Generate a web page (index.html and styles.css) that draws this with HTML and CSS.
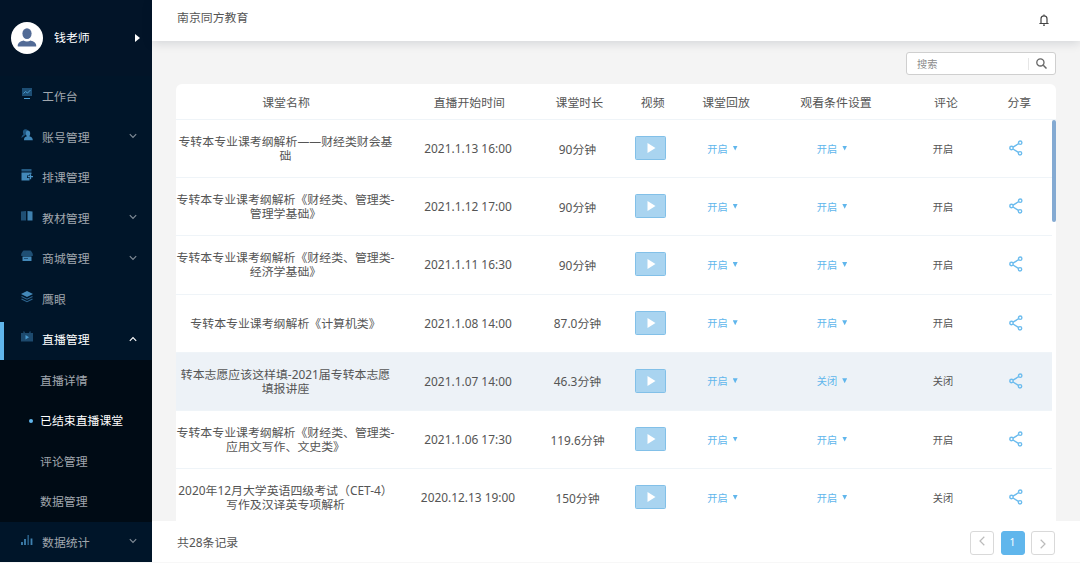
FILE: index.html
```html
<!DOCTYPE html>
<html lang="zh-CN">
<head>
  <meta charset="UTF-8" />
  <meta name="viewport" content="width=device-width, initial-scale=1.0"/>
  <title>南京同方教育</title>
  <link rel="stylesheet" href="styles.css">
</head>
<body>
  <!-- shared icons -->
  <svg class="sprite">
    <symbol id="down" viewBox="0 0 8 6"><path d="M.8 1.2 4 4.5 7.2 1.2" fill="none" stroke="currentColor" stroke-width="1.1"/></symbol>
    <symbol id="share" viewBox="0 0 14 16"><g fill="none" stroke="currentColor" stroke-width="1.4"><circle cx="2.5" cy="8" r="1.7"/><circle cx="11.2" cy="2.7" r="1.7"/><circle cx="11" cy="13.3" r="1.7"/><path d="M4 7.1l5.600-3.400M4 9l5.400 3.400"/></g></symbol>
    <symbol id="play" viewBox="0 0 8 10"><path d="M0 0v10l8-5z" fill="#fff"/></symbol>
  </svg>

  <div class="layout">
    <aside class="sidebar">
      <div class="user">
        <div class="avatar">
          <svg width="20" height="20" viewBox="0 0 20 20" fill="#526b96"><ellipse cx="10" cy="5.6" rx="4.6" ry="5.4"/><path d="M.8 18.6c-.5-3.6 2.2-5.3 5.6-6.2 2.3 1.5 4.9 1.5 7.2 0 3.400.9 6.100 2.600 5.600 6.200z"/></svg>
        </div>
        <span class="user-name">钱老师</span>
        <i class="user-arrow"></i>
      </div>

      <div class="menu-item">
        <svg class="menu-icon" viewBox="0 0 12 12"><path d="M1 0h10v8H1z" fill="#1d4e74"/><path d="M2.500 5.500l2-2 2 1.500 3-3M3 10.500h6" fill="none" stroke="#4a9bd0"/></svg>
        <span>工作台</span>
      </div>
      <div class="menu-item">
        <svg class="menu-icon" viewBox="0 0 12 12"><path d="M.5 9c0-2 .8-3 2-3.500C1.200 2.500 2.300.3 4.500.3S7.500 2 7 4z" fill="#1f5680"/><path d="M3 11.300c-.2-2.500 1-3.400 3-4C4 5 4.800 1.400 7 1.400S10 5 8.300 7.300c2 .6 3.500 1.500 3.500 4z" fill="#4187b8"/></svg>
        <span>账号管理</span><svg class="arrow"><use href="#down"/></svg>
      </div>
      <div class="menu-item">
        <svg class="menu-icon" viewBox="0 0 12 12"><path d="M.5 0h10v2.500H.5z" fill="#245a82"/><path d="M.5 3.500h10v1.500H8.500V6.500H6v2.500h2.500v2.500h-8z" fill="#4389b9"/><path d="M6.800 7.700h5.200M9.500 5.200v5" stroke="#4a94c6" stroke-width="1.300"/></svg>
        <span>排课管理</span>
      </div>
      <div class="menu-item">
        <svg class="menu-icon" viewBox="0 0 12 12"><path d="M0 1.500l5-.5v9.500H0z" fill="#1f4f74"/><path d="M6.500 1l5 .5v9h-5z" fill="#3f81af"/></svg>
        <span>教材管理</span><svg class="arrow"><use href="#down"/></svg>
      </div>
      <div class="menu-item">
        <svg class="menu-icon" viewBox="0 0 12 12"><path d="M2.500.5h7Q11 1.500 11.800 4v2H.2V4Q1 1.500 2.500.5z" fill="#1f4f74"/><path d="M1.500 6.500h9V11h-9z" fill="#4389b9"/><path d="M3 8.500h4" stroke="#1f4f74"/></svg>
        <span>商城管理</span><svg class="arrow"><use href="#down"/></svg>
      </div>
      <div class="menu-item">
        <svg class="menu-icon" viewBox="0 0 12 12"><path d="M6 0l6 3-6 3-6-3z" fill="#4389b9"/><path d="M.5 5.500L6 8.200l5.500-2.700M.5 8L6 10.700 11.500 8" fill="none" stroke="#2c648e" stroke-width="1.200"/></svg>
        <span>鹰眼</span>
      </div>
      <div class="menu-item open">
        <svg class="menu-icon" viewBox="0 0 12 12"><path d="M0 2h2.500L2 .5h1.500L4 2h4L8.500.5H10L9.500 2H12v8.500H0z" fill="#1d4a6e"/><path d="M4.500 4v4.500L8 6.200z" fill="#4a9bd0"/></svg>
        <span>直播管理</span><svg class="arrow"><use href="#down"/></svg>
      </div>
      <div class="submenu">
        <div class="submenu-item">直播详情</div>
        <div class="submenu-item current">已结束直播课堂</div>
        <div class="submenu-item">评论管理</div>
        <div class="submenu-item">数据管理</div>
      </div>
      <div class="menu-item">
        <svg class="menu-icon" viewBox="0 0 12 12"><path d="M1 8v3M4 5v6M10.500 4.500V11" stroke="#3f81af" stroke-width="1.800"/><path d="M7.200 1v10" stroke="#265b83" stroke-width="1.600"/></svg>
        <span>数据统计</span><svg class="arrow"><use href="#down"/></svg>
      </div>
    </aside>

    <div class="main">
      <header class="topbar">
        <span>南京同方教育</span>
        <svg class="bell" viewBox="0 0 10 12"><path d="M2 9.300V4.800a3 3 0 0 1 6 0v4.500M.4 9.500h9.200M5 .4v1.500M4 11.200h2" fill="none" stroke="#444" stroke-width="1.200"/></svg>
      </header>

      <section class="content">
        <div class="search">
          <span class="search-text">搜索</span>
          <span class="search-btn"><svg width="11" height="11" viewBox="0 0 11 11"><path d="M7.300 7.300l3.200 3.200" stroke="#666" stroke-width="1.500"/><circle cx="4.400" cy="4.400" r="3.600" fill="none" stroke="#666" stroke-width="1.300"/></svg></span>
        </div>

        <div class="table">
          <div class="row head">
            <div>课堂名称</div><div>直播开始时间</div><div>课堂时长</div><div>视频</div>
            <div>课堂回放</div><div>观看条件设置</div><div>评论</div><div>分享</div>
          </div>
          <div class="table-body">
            <div class="rows">
              <div class="row">
                <div class="name">专转本专业课考纲解析——财经类财会基<br>础</div><div>2021.1.13 16:00</div><div>90分钟</div>
                <div><span class="video"><svg><use href="#play"/></svg></span></div>
                <div class="select">开启<i></i></div><div class="select">开启<i></i></div><div class="small">开启</div>
                <div><svg class="share"><use href="#share"/></svg></div>
              </div>
              <div class="row">
                <div class="name">专转本专业课考纲解析《财经类、管理类-<br>管理学基础》</div><div>2021.1.12 17:00</div><div>90分钟</div>
                <div><span class="video"><svg><use href="#play"/></svg></span></div>
                <div class="select">开启<i></i></div><div class="select">开启<i></i></div><div class="small">开启</div>
                <div><svg class="share"><use href="#share"/></svg></div>
              </div>
              <div class="row">
                <div class="name">专转本专业课考纲解析《财经类、管理类-<br>经济学基础》</div><div>2021.1.11 16:30</div><div>90分钟</div>
                <div><span class="video"><svg><use href="#play"/></svg></span></div>
                <div class="select">开启<i></i></div><div class="select">开启<i></i></div><div class="small">开启</div>
                <div><svg class="share"><use href="#share"/></svg></div>
              </div>
              <div class="row">
                <div class="name">专转本专业课考纲解析《计算机类》</div><div>2021.1.08 14:00</div><div>87.0分钟</div>
                <div><span class="video"><svg><use href="#play"/></svg></span></div>
                <div class="select">开启<i></i></div><div class="select">开启<i></i></div><div class="small">开启</div>
                <div><svg class="share"><use href="#share"/></svg></div>
              </div>
              <div class="row active">
                <div class="name">转本志愿应该这样填-2021届专转本志愿<br>填报讲座</div><div>2021.1.07 14:00</div><div>46.3分钟</div>
                <div><span class="video"><svg><use href="#play"/></svg></span></div>
                <div class="select">开启<i></i></div><div class="select">关闭<i></i></div><div class="small">关闭</div>
                <div><svg class="share"><use href="#share"/></svg></div>
              </div>
              <div class="row">
                <div class="name">专转本专业课考纲解析《财经类、管理类-<br>应用文写作、文史类》</div><div>2021.1.06 17:30</div><div>119.6分钟</div>
                <div><span class="video"><svg><use href="#play"/></svg></span></div>
                <div class="select">开启<i></i></div><div class="select">开启<i></i></div><div class="small">开启</div>
                <div><svg class="share"><use href="#share"/></svg></div>
              </div>
              <div class="row">
                <div class="name">2020年12月大学英语四级考试（CET-4）<br>写作及汉译英专项解析</div><div>2020.12.13 19:00</div><div>150分钟</div>
                <div><span class="video"><svg><use href="#play"/></svg></span></div>
                <div class="select">开启<i></i></div><div class="select">开启<i></i></div><div class="small">关闭</div>
                <div><svg class="share"><use href="#share"/></svg></div>
              </div>
            </div>
            <div class="scrollbar"></div>
          </div>
        </div>
      </section>

      <footer class="footer">
        <span>共28条记录</span>
        <div class="pager">
          <span class="page prev"><svg width="6" height="10" viewBox="0 0 6 10"><path d="M5.300.8 1 5l4.300 4.200" fill="none" stroke="#bbb" stroke-width="1.200"/></svg></span>
          <span class="page on">1</span>
          <span class="page next"><svg width="6" height="10" viewBox="0 0 6 10"><path d="M.7.8 5 5 .7 9.200" fill="none" stroke="#bbb" stroke-width="1.200"/></svg></span>
        </div>
      </footer>
    </div>
  </div>
</body>
</html>
```
FILE: styles.css
```css
* {
  margin: 0;
  padding: 0;
  box-sizing: border-box;
}

body {
  height: 563px;
  overflow: hidden;
  font-family: "Noto Sans", "Noto Sans CJK SC", sans-serif;
  font-size: 11.9px;
  color: #555;
  background: #f7f7f7;
}

.sprite {
  display: none;
}

.layout {
  display: flex;
  height: 562px;
}

/* sidebar */
.sidebar {
  width: 152px;
  flex: none;
  background: #001529;
  color: #a0a7ae;
}

.user {
  height: 76px;
  display: flex;
  align-items: center;
  padding: 0 12px 0 11px;
  background: #021428;
  color: #fff;
}

.avatar {
  width: 32px;
  height: 32px;
  border-radius: 50%;
  background: #fff;
  display: flex;
  align-items: center;
  justify-content: center;
}

.user-name {
  margin-left: 11px;
  padding-bottom: 3px;
}

.user-arrow {
  margin-left: auto;
  border: 4.5px solid transparent;
  border-left: 5px solid #fff;
  border-right: 0;
}

.menu-item {
  height: 40.5px;
  display: flex;
  align-items: center;
  padding: 0 15px 0 21px;
}

.menu-item span {
  padding-bottom: 1px;
}

.menu-icon {
  width: 12px;
  height: 12px;
  margin: 0 9px 4px 0;
}

.arrow {
  width: 8px;
  height: 6px;
  margin-left: auto;
  margin-bottom: 1px;
  color: #828d98;
}

.open {
  color: #fff;
  background: linear-gradient(#60b6ec, #60b6ec) left bottom / 4px 38px no-repeat;
}

.open .arrow {
  color: #fff;
  transform: rotate(180deg);
}

.submenu {
  background: #000b15;
}

.submenu-item {
  height: 40.5px;
  line-height: 40px;
  padding-left: 40px;
}

.current {
  color: #fff;
  padding-left: 29px;
  display: flex;
  align-items: center;
}

.current::before {
  content: "";
  width: 4px;
  height: 4px;
  margin: 2px 7px 0 0;
  border-radius: 50%;
  background: #60b6ec;
}

/* right side */
.main {
  flex: 1;
  display: flex;
  flex-direction: column;
  background: #f4f4f4;
}

.topbar {
  height: 41px;
  flex: none;
  display: flex;
  align-items: center;
  justify-content: space-between;
  padding: 0 31px 4px 25px;
  background: #fff;
  box-shadow: 0 2px 10px rgba(0, 21, 41, 0.14);
}

.topbar span {
  padding-bottom: 4px;
}

.bell {
  width: 10px;
  height: 12px;
  margin-top: 2px;
}

.content {
  flex: 1;
  min-height: 0;
  padding: 11px 24px 0;
  display: flex;
  flex-direction: column;
}

.search {
  width: 150px;
  height: 23px;
  flex: none;
  align-self: flex-end;
  display: flex;
  align-items: center;
  justify-content: space-between;
  padding-left: 10px;
  border: 1px solid #cfcfcf;
  border-radius: 3px;
  background: #fff;
}

.search-text {
  font-size: 10.2px;
  color: #8c8c8c;
}

.search-btn {
  width: 27px;
  height: 12px;
  display: flex;
  align-items: center;
  justify-content: center;
  padding-right: 2px;
  border-left: 1px solid #e6e6e6;
}

.table {
  margin-top: 9px;
  flex: 1;
  min-height: 0;
  overflow: hidden;
  background: #fff;
  border-radius: 6px 6px 0 0;
}

.row {
  height: 58.2px;
  display: grid;
  grid-template-columns: 6fr 4fr 2fr 2fr 2fr 4fr 2fr 2fr;
  align-items: center;
  text-align: center;
  white-space: nowrap;
  border-bottom: 1px solid #eff4f8;
}

.row > div {
  min-width: 0;
  display: flex;
  align-items: center;
  justify-content: center;
  padding-bottom: 1px;
}

.row .name {
  display: block;
  line-height: 14px;
  padding-bottom: 1px;
}

.head {
  height: 36px;
}

.active {
  background: #edf2f7;
}

.table-body {
  display: flex;
  align-items: flex-start;
}

.rows {
  flex: 1;
}

.scrollbar {
  width: 4px;
  height: 102px;
  border-radius: 2px;
  background: #84aad2;
}

.video {
  width: 31px;
  height: 24px;
  display: flex;
  align-items: center;
  justify-content: center;
  border: 1px solid #82c0e8;
  border-radius: 1.5px;
  background: #a9d4f0;
}

.video svg {
  width: 9px;
  height: 10px;
  margin-left: 1px;
}

.row .select {
  font-size: 10.2px;
  color: #60b6ec;
  padding-right: 2px;
}

.select i {
  width: 5px;
  height: 5px;
  margin-left: 5px;
  background: #60b6ec;
  clip-path: polygon(0 0, 100% 0, 50% 100%);
}

.row .small {
  font-size: 10.2px;
  padding-left: 1px;
}

.share {
  width: 14px;
  height: 16px;
  color: #6cbcee;
}

/* footer */
.footer {
  height: 41px;
  flex: none;
  display: flex;
  align-items: center;
  justify-content: space-between;
  padding: 2px 25px 0;
  background: #fff;
}

.footer > span {
  padding-bottom: 2px;
}

.pager {
  display: flex;
  gap: 6.5px;
}

.page {
  width: 24px;
  height: 24px;
  display: flex;
  align-items: center;
  justify-content: center;
  border: 1px solid #d9d9d9;
  border-radius: 3px;
}

.page.on {
  border-color: #60b6ec;
  background: #60b6ec;
  color: #fff;
  font-size: 10.2px;
  padding-bottom: 2px;
}

.prev {
  padding-bottom: 4px;
}

.next {
  padding-top: 3px;
}
```
